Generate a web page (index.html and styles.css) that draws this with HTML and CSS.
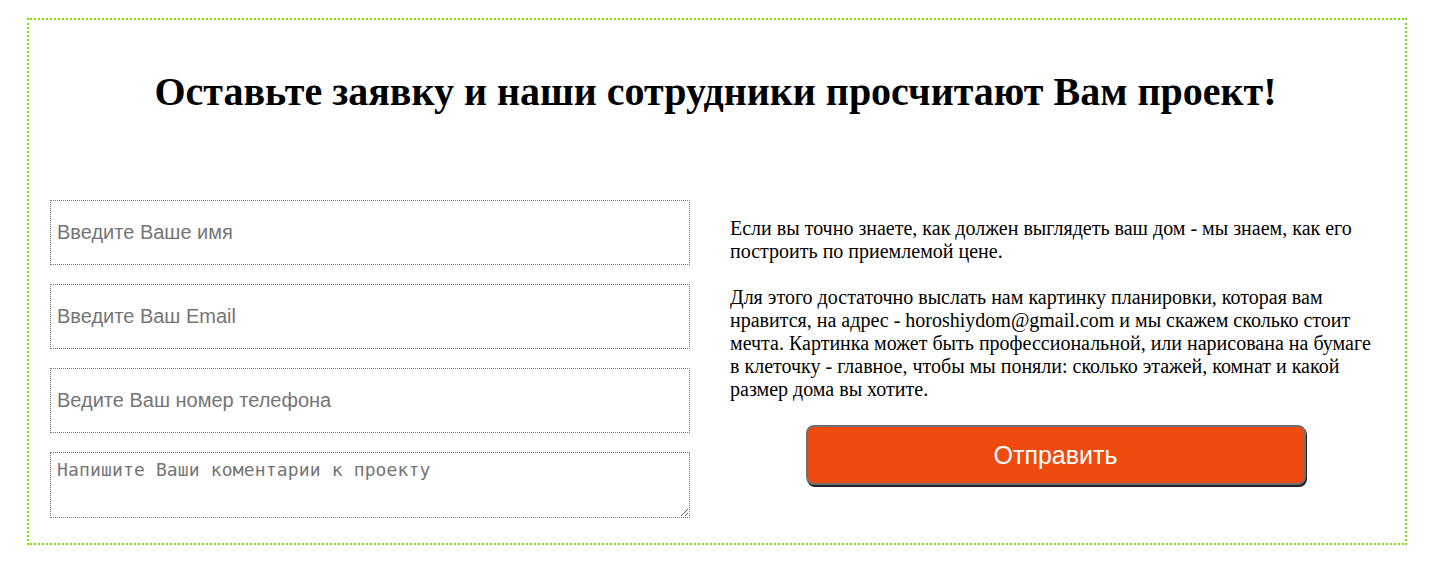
FILE: index.html
```html
<!DOCTYPE html>
<html lang="ru">
<head>
<meta charset="utf-8">
<title>Заявка</title>
<link rel="stylesheet" href="styles.css">
</head>
<body>
<section class="wrap">
  <h1 class="title">Оставьте заявку и наши сотрудники просчитают Вам проект!</h1>
  <div class="row">
    <form class="form-col">
      <input class="field" type="text" placeholder="Введите Ваше имя">
      <input class="field" type="email" placeholder="Введите Ваш Email">
      <input class="field" type="tel" placeholder="Ведите Ваш номер телефона">
      <textarea class="field area" placeholder="Напишите Ваши коментарии к проекту"></textarea>
    </form>
    <div class="info-col">
      <p class="info">Если вы точно знаете, как должен выглядеть ваш дом - мы знаем, как его построить по приемлемой цене.<br><br>Для этого достаточно выслать нам картинку планировки, которая вам нравится, на адрес - horoshiydom@gmail.com и мы скажем сколько стоит мечта. Картинка может быть профессиональной, или нарисована на бумаге в клеточку - главное, чтобы мы поняли: сколько этажей, комнат и какой размер дома вы хотите.</p>
      <button class="send" type="button">Отправить</button>
    </div>
  </div>
</section>
</body>
</html>
```

FILE: styles.css
```css
html, body {
  margin: 0;
  padding: 0;
  background: #fff;
}
body {
  font-family: "Liberation Serif", "Times New Roman", serif;
  color: #000;
}
.wrap {
  box-sizing: border-box;
  width: 1380px;
  margin: 18px 0 0 27px;
  border: 2px dotted #7ee000;
  padding: 46px 24px 25px 21px;
}
.title {
  margin: 0;
  text-align: center;
  font-size: 40px;
  font-weight: bold;
  line-height: 52px;
}
.row {
  display: flex;
  gap: 40px;
  margin-top: 82px;
}
.form-col {
  width: 640px;
  display: flex;
  flex-direction: column;
  gap: 19px;
  margin: 0;
}
.field {
  box-sizing: border-box;
  width: 640px;
  height: 65px;
  margin: 0;
  border: 1px dotted #777;
  padding: 0 6px;
  font-family: "Liberation Sans", Arial, sans-serif;
  font-size: 20px;
  color: #000;
  background: #fff;
  outline: none;
}
.field::placeholder {
  color: #757575;
}
.area {
  height: 66px;
  padding: 6px 6px;
  font-family: "DejaVu Sans Mono", monospace;
  font-size: 18px;
  letter-spacing: 0.15px;
  resize: vertical;
}
.info-col {
  width: 651px;
  display: flex;
  flex-direction: column;
  align-items: center;
}
.info {
  margin: 17px 0 0 0;
  font-size: 20px;
  line-height: 23px;
  align-self: stretch;
}
.send {
  margin-top: 24px;
  width: 500px;
  height: 60px;
  border: 2px solid #707070;
  border-radius: 8px;
  background: #f04b0f;
  color: #fff;
  font-family: "Liberation Sans", Arial, sans-serif;
  font-size: 25px;
  box-shadow: 1px 2px 0 #222;
  cursor: pointer;
}
```
